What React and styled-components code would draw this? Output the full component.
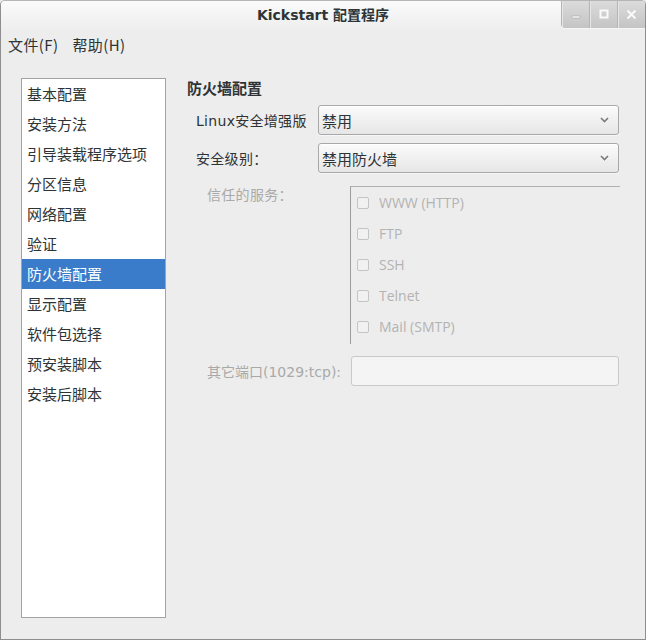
import React from "react";
import styled, { createGlobalStyle } from "styled-components";

const Global = createGlobalStyle`
  html, body { margin: 0; padding: 0; background: #ededed; }
  #root { width: 646px; height: 640px; }
  * { box-sizing: border-box; }
`;

const FONT = `"DejaVu Sans", "Noto Sans CJK SC", sans-serif`;

const Window = styled.div`
  width: 646px;
  height: 640px;
  background: #ededed;
  border: 1px solid #8e8e8e;
  border-top-color: #b5b5b5;
  border-radius: 5px 5px 0 0;
  display: flex;
  flex-direction: column;
  font-family: ${FONT};
  color: #2e3436;
  overflow: hidden;
`;

const TitleBar = styled.div`
  height: 30px;
  display: grid;
  grid-template-columns: 1fr auto 1fr;
  align-items: start;
  background: linear-gradient(#fbfbfb, #ededed);
`;

const Title = styled.div`
  grid-column: 2;
  font-weight: bold;
  font-size: 14px;
  line-height: 30px;
  color: #2e3436;
  margin-top: -1px;
`;

const WinButtons = styled.div`
  grid-column: 3;
  justify-self: end;
  display: flex;
  height: 28px;
  margin-top: -1px;
  border-bottom-left-radius: 4px;
  overflow: hidden;
  box-shadow: 0 1px 0 #f6f6f6;
`;

const WinButton = styled.div`
  width: 28px;
  height: 28px;
  background: linear-gradient(#dcdcdc, #c4c4c4);
  border-left: 1px solid #b4b4b4;
  box-shadow: inset 1px 0 0 #e6e6e6;
  display: flex;
  align-items: center;
  justify-content: center;
`;

const MenuBar = styled.div`
  height: 27px;
  display: flex;
  align-items: center;
  padding-left: 7px;
  gap: 14px;
`;

const MenuItem = styled.span`
  color: #2e3436;
  font-family: "Noto Sans CJK SC", sans-serif;
  font-size: 15px;
  letter-spacing: 0.4px;
`;

const Body = styled.div`
  flex: 1;
  display: flex;
  padding: 20px 25px 21px 20px;
  gap: 21px;
`;

const Sidebar = styled.div`
  width: 145px;
  background: #ffffff;
  border: 1px solid #a3a3a3;
  display: flex;
  flex-direction: column;
`;

const SideItem = styled.div`
  height: 30px;
  line-height: 30px;
  padding-left: 5px;
  font-family: "Noto Sans CJK SC", sans-serif;
  font-size: 15px;
  color: ${(p) => (p.$active ? "#ffffff" : "#2e3436")};
  background: ${(p) => (p.$active ? "#3a7cc9" : "transparent")};
`;

const Panel = styled.div`
  flex: 1;
  display: flex;
  flex-direction: column;
`;

const Heading = styled.div`
  font-family: "Noto Sans CJK SC", sans-serif;
  font-weight: bold;
  font-size: 15px;
  line-height: 20px;
  height: 20px;
  color: #2e3436;
`;

const FormGrid = styled.div`
  display: grid;
  grid-template-columns: 122px 301px;
  row-gap: 8px;
  padding-left: 9px;
  margin-top: 7px;
  align-items: center;
`;

const Label = styled.div`
  font-size: 14px;
  font-family: ${FONT};
  color: ${(p) => (p.$disabled ? "#a9a9a9" : "#2e3436")};
  white-space: nowrap;
  letter-spacing: ${(p) => (p.$tight ? "0" : "0.3px")};
`;

const Combo = styled.div`
  height: 30px;
  border: 1px solid #a8a8a8;
  border-radius: 3px;
  background: linear-gradient(#fbfbfb, #e6e6e6);
  box-shadow: inset 0 1px 0 #ffffff, 0 1px 0 #f8f8f8;
  display: flex;
  align-items: center;
  justify-content: space-between;
  padding: 0 9px 0 3px;
  font-family: "Noto Sans CJK SC", sans-serif;
  font-size: 15px;
  color: #2e3436;
`;

const Services = styled.div`
  display: grid;
  grid-template-columns: 143px 270px;
  padding-left: 20px;
  margin-top: 13px;
`;

const ServicesLabel = styled(Label)`
  line-height: 18px;
`;

const Frame = styled.div`
  border-left: 1px solid #9d9d9d;
  border-top: 1px solid #b1b1b1;
  height: 158px;
  display: flex;
  flex-direction: column;
  padding-bottom: 2px;
`;

const CheckRow = styled.div`
  height: 31px;
  display: flex;
  align-items: center;
  padding-left: 6px;
  gap: 10px;
  font-family: "Open Sans", "DejaVu Sans", sans-serif;
  font-size: 14px;
  color: #b3b3b3;
`;

const Box = styled.span`
  width: 12px;
  height: 12px;
  border: 1px solid #c4c4c4;
  border-radius: 2px;
  background: #f1f1f1;
`;

const PortRow = styled.div`
  display: grid;
  grid-template-columns: 144px 268px;
  padding-left: 20px;
  margin-top: 12px;
  align-items: center;
`;

const Input = styled.div`
  height: 30px;
  border: 1px solid #c9c9c9;
  border-radius: 3px;
  background: #f4f4f4;
`;

const Chevron = () => (
  <svg width="9" height="6" viewBox="0 0 9 6">
    <path d="M1 1 L4.5 4.5 L8 1" fill="none" stroke="#7a7a7a" strokeWidth="1.6" />
  </svg>
);

const items = [
  "基本配置",
  "安装方法",
  "引导装载程序选项",
  "分区信息",
  "网络配置",
  "验证",
  "防火墙配置",
  "显示配置",
  "软件包选择",
  "预安装脚本",
  "安装后脚本",
];

const services = ["WWW (HTTP)", "FTP", "SSH", "Telnet", "Mail (SMTP)"];

export default function App() {
  return (
    <>
      <Global />
      <Window>
        <TitleBar>
          <Title>Kickstart 配置程序</Title>
          <WinButtons>
            <WinButton>
              <svg width="10" height="10" viewBox="0 0 10 10">
                <rect x="1" y="7" width="8" height="2" fill="#fafafa" stroke="#a0a0a0" strokeWidth="0.5" />
              </svg>
            </WinButton>
            <WinButton>
              <svg width="10" height="10" viewBox="0 0 10 10">
                <rect x="1.5" y="1.5" width="7" height="7" fill="none" stroke="#fafafa" strokeWidth="2" />
              </svg>
            </WinButton>
            <WinButton>
              <svg width="11" height="11" viewBox="0 0 11 11">
                <path d="M1.5 1.5 L9.5 9.5 M9.5 1.5 L1.5 9.5" stroke="#fafafa" strokeWidth="2" />
              </svg>
            </WinButton>
          </WinButtons>
        </TitleBar>
        <MenuBar>
          <MenuItem>文件(F)</MenuItem>
          <MenuItem>帮助(H)</MenuItem>
        </MenuBar>
        <Body>
          <Sidebar>
            {items.map((t) => (
              <SideItem key={t} $active={t === "防火墙配置"}>
                {t}
              </SideItem>
            ))}
          </Sidebar>
          <Panel>
            <Heading>防火墙配置</Heading>
            <FormGrid>
              <Label>Linux安全增强版</Label>
              <Combo>
                <span>禁用</span>
                <Chevron />
              </Combo>
              <Label>安全级别：</Label>
              <Combo>
                <span>禁用防火墙</span>
                <Chevron />
              </Combo>
            </FormGrid>
            <Services>
              <ServicesLabel $disabled>信任的服务：</ServicesLabel>
              <Frame>
                {services.map((s) => (
                  <CheckRow key={s}>
                    <Box />
                    <span>{s}</span>
                  </CheckRow>
                ))}
              </Frame>
            </Services>
            <PortRow>
              <Label $disabled $tight>其它端口(1029:tcp):</Label>
              <Input />
            </PortRow>
          </Panel>
        </Body>
      </Window>
    </>
  );
}
